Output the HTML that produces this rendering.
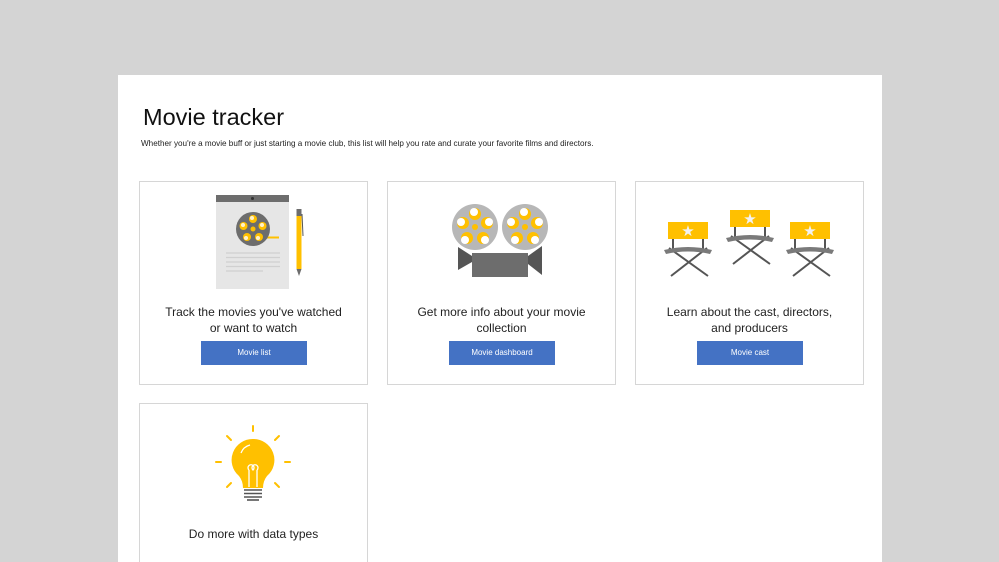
<!DOCTYPE html>
<html style="width:999px;height:562px;overflow:hidden"><head><meta charset="utf-8"><style>
body{margin:0;width:999px;height:562px;background:#d4d4d4;overflow:hidden;font-family:"Liberation Sans",sans-serif;position:relative}
.sheet{position:absolute;left:118px;top:75px;width:764px;height:487px;background:#fff}
.card{position:absolute;width:227px;height:202px;border:1px solid #d6d6d6;background:#fff}
.t{position:absolute;left:0;width:100%;text-align:center;font-size:12px;color:#222;line-height:16px}
.btn{position:absolute;width:106px;height:24px;background:#4472c4;color:#fff;font-size:8px;text-align:center;line-height:24px}
svg{position:absolute;left:0;top:0}
</style></head><body>
<div class="sheet"></div>
<div style="position:absolute;left:143px;top:104px;font-size:23.5px;color:#111">Movie tracker</div>
<div style="position:absolute;left:141px;top:139px;font-size:8.15px;color:#222;white-space:nowrap">Whether you're a movie buff or just starting a movie club, this list will help you rate and curate your favorite films and directors.</div>

<div class="card" style="left:139px;top:181px"><div class="t" style="top:122px">Track the movies you've watched<br>or want to watch</div><div class="btn" style="left:61px;top:159px">Movie list</div></div>
<div class="card" style="left:387px;top:181px"><div class="t" style="top:122px">Get more info about your movie<br>collection</div><div class="btn" style="left:61px;top:159px">Movie dashboard</div></div>
<div class="card" style="left:635px;top:181px"><div class="t" style="top:122px">Learn about the cast, directors,<br>and producers</div><div class="btn" style="left:61px;top:159px">Movie cast</div></div>
<div class="card" style="left:139px;top:403px;height:170px;border-bottom:none"><div class="t" style="top:122px">Do more with data types</div></div>

<svg width="999" height="562">
<rect x="216" y="195" width="73" height="94" fill="#e6e6e6"/>
<rect x="216" y="195" width="73" height="7" fill="#6d6d6d"/>
<circle cx="252.5" cy="198.5" r="1.5" fill="#333"/>
<rect x="253" y="236.5" width="26" height="2" fill="#ffc000"/>
<circle cx="253" cy="229" r="17" fill="#6d6d6d"/>
<g fill="#ffc000"><circle cx="253" cy="219" r="4"/><circle cx="262.5" cy="226" r="4"/><circle cx="259" cy="237" r="4"/><circle cx="247" cy="237" r="4"/><circle cx="243.5" cy="226" r="4"/><circle cx="253" cy="229" r="2.5"/></g>
<g fill="#fff" opacity=".8"><circle cx="252" cy="218" r="2"/><circle cx="262" cy="225" r="2"/><circle cx="258" cy="238" r="2"/><circle cx="246" cy="238" r="2"/><circle cx="243" cy="225" r="2"/></g>
<g stroke="#d0d0d0" stroke-width="1.2"><line x1="226" y1="253" x2="280" y2="253"/><line x1="226" y1="257.5" x2="280" y2="257.5"/><line x1="226" y1="262" x2="280" y2="262"/><line x1="226" y1="266.5" x2="280" y2="266.5"/><line x1="226" y1="271" x2="263" y2="271"/></g>
<rect x="296.5" y="209" width="5" height="8" fill="#6d6d6d"/>
<rect x="296.5" y="216" width="5" height="53" fill="#ffc000"/>
<polygon points="296.5,269 301.5,269 299,276" fill="#6d6d6d"/>
<line x1="302" y1="214" x2="303" y2="236" stroke="#555" stroke-width="1"/>
<polygon points="458,247 472,256 472,262 458,270" fill="#555"/>
<polygon points="542,246 528,256 528,264 542,275" fill="#555"/>
<rect x="472" y="253" width="56" height="24" fill="#6d6d6d"/>
<g>
<circle cx="475" cy="227" r="23" fill="#b7b7b7"/>
<circle cx="525" cy="227" r="23" fill="#b7b7b7"/>
<g fill="#ffc000"><circle cx="475" cy="214" r="6"/><circle cx="487" cy="223" r="6"/><circle cx="483" cy="238" r="6"/><circle cx="467" cy="238" r="6"/><circle cx="463" cy="223" r="6"/><circle cx="475" cy="227" r="3"/>
<circle cx="525" cy="214" r="6"/><circle cx="537" cy="223" r="6"/><circle cx="533" cy="238" r="6"/><circle cx="517" cy="238" r="6"/><circle cx="513" cy="223" r="6"/><circle cx="525" cy="227" r="3"/></g>
<g fill="#fff"><circle cx="474" cy="212" r="4"/><circle cx="489" cy="222" r="4"/><circle cx="485" cy="240" r="4"/><circle cx="465" cy="240" r="4"/><circle cx="461" cy="222" r="4"/>
<circle cx="524" cy="212" r="4"/><circle cx="539" cy="222" r="4"/><circle cx="535" cy="240" r="4"/><circle cx="515" cy="240" r="4"/><circle cx="511" cy="222" r="4"/></g>
</g>
<g id="ch">
<g stroke="#555" stroke-width="2"><line x1="671" y1="276" x2="707" y2="248"/><line x1="669" y1="248" x2="708" y2="276"/><line x1="673" y1="238" x2="673" y2="250"/><line x1="703" y1="238" x2="703" y2="250"/></g>
<path d="M664,250 Q688,244 712,250 L710,254 Q688,249 666,254 Z" fill="#7a7a7a"/>
<rect x="668" y="222" width="40" height="17" fill="#ffc000"/>
<text x="688" y="236" font-size="15" fill="#f2f2f2" text-anchor="middle">★</text>
</g>
<use href="#ch" transform="translate(62,-12)"/>
<use href="#ch" transform="translate(122,0)"/>
<g stroke="#ffc000" stroke-width="2" stroke-linecap="round"><line x1="253" y1="426" x2="253" y2="431"/><line x1="227" y1="436" x2="231" y2="440"/><line x1="279" y1="436" x2="275" y2="440"/><line x1="216" y1="462" x2="221" y2="462"/><line x1="285" y1="462" x2="290" y2="462"/><line x1="227" y1="487" x2="231" y2="483"/><line x1="279" y1="487" x2="275" y2="483"/></g>
<path d="M253,439 A21,21 0 0 1 267,476 Q263,481 263,488 L243,488 Q243,481 239,476 A21,21 0 0 1 253,439Z" fill="#ffc000"/>
<path d="M249,487 L249,470 M257,487 L257,470 M249,470 a3,3 0 1 1 4,0 a3,3 0 1 1 4,0" stroke="#fff" stroke-width="1.3" fill="none"/>
<path d="M241,453 A13,13 0 0 1 250,445" stroke="#fff" stroke-width="1.3" fill="none"/>
<g stroke="#555" stroke-width="1.6"><line x1="244" y1="490" x2="262" y2="490"/><line x1="244" y1="493.5" x2="262" y2="493.5"/><line x1="244" y1="497" x2="262" y2="497"/><line x1="247" y1="500" x2="259" y2="500"/></g>
</svg>
</body></html>
